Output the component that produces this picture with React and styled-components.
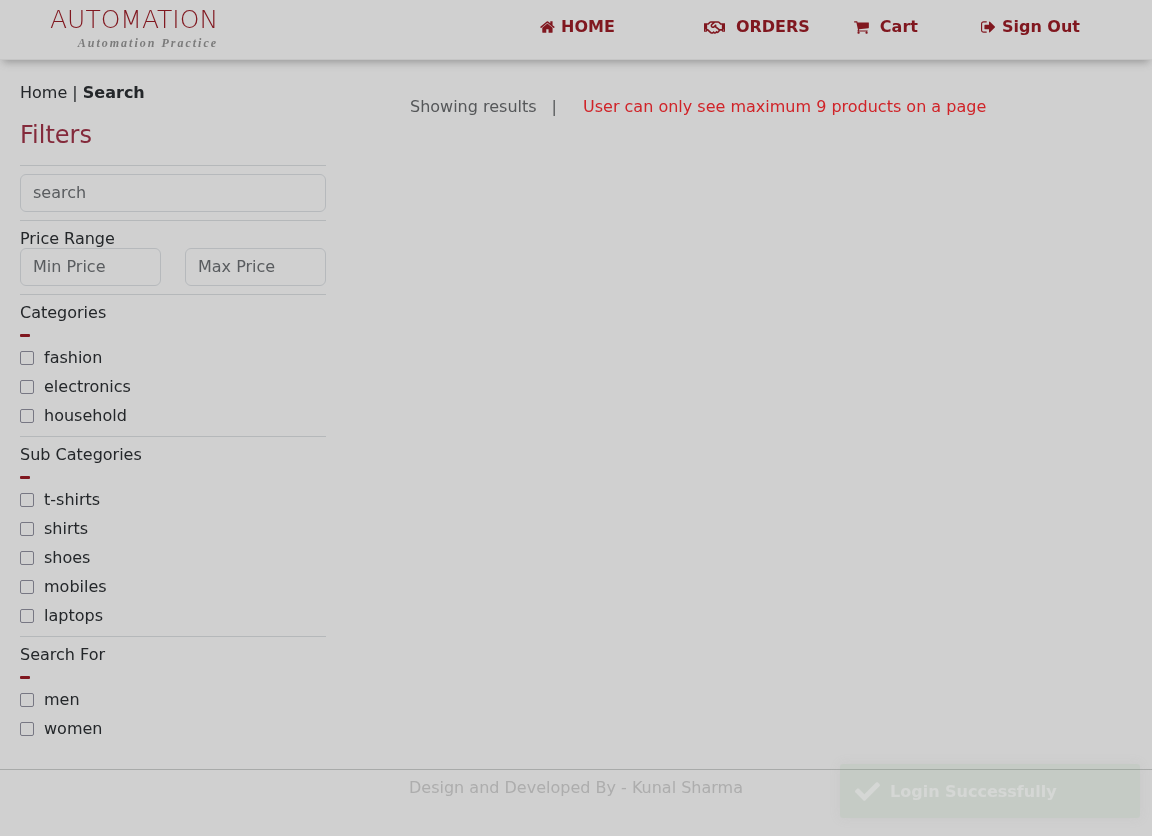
import React from "react";
import styled, { createGlobalStyle } from "styled-components";
import { FaRegHandshake, FaCheck } from "react-icons/fa";

const GlobalStyle = createGlobalStyle`
  *, *::before, *::after { box-sizing: border-box; }
  body {
    margin: 0;
    background: #d0d0d0;
    color: #24272a;
    font-family: "DejaVu Sans", sans-serif;
    font-size: 16px;
    line-height: 24px;
  }
  h1, h2, p { margin: 0; font-weight: 400; }
  a { color: inherit; text-decoration: none; }
`;

const Page = styled.div`
  min-height: 100vh;
  display: flex;
  flex-direction: column;
  will-change: opacity;
`;

const Header = styled.header`
  height: 60px;
  display: flex;
  justify-content: space-between;
  align-items: flex-start;
  padding: 0 72px 0 50px;
  border-bottom: 1px solid #c6c6c6;
  box-shadow: 0 5px 8px -3px #969696;
`;

const Brand = styled.a`
  display: flex;
  flex-direction: column;
  align-items: flex-end;
  padding-top: 5px;
`;

const BrandName = styled.span`
  font-size: 25px;
  font-weight: 200;
  line-height: 30px;
  color: #80171f;
`;

const BrandTagline = styled.span`
  font-family: "Z003", "URW Chancery L", "Apple Chancery", "Liberation Serif", cursive;
  font-size: 12px;
  font-style: italic;
  font-weight: 700;
  line-height: 16px;
  letter-spacing: 2px;
  color: #7b7b7b;
`;

const Nav = styled.nav`
  display: flex;
  padding-top: 15px;
  color: #80171f;
  font-weight: 700;
`;

const NavLink = styled.a`
  display: flex;
  align-items: center;
  gap: ${(p) => p.$gap}px;
  margin-left: ${(p) => p.$space}px;
  white-space: nowrap;
`;

const Icon = styled.svg`
  width: 16px;
  height: 16px;
  fill: currentColor;
`;

const Content = styled.div`
  flex: 1;
  display: grid;
  grid-template-columns: 306px 1fr;
  column-gap: 84px;
  padding: 21px 20px 0;
`;

const Breadcrumb = styled.nav`
  margin-bottom: 16px;
`;

const FilterTitle = styled.h1`
  font-size: 24px;
  line-height: 28px;
  color: #842a3b;
  margin-bottom: 16px;
`;

const Section = styled.section`
  border-top: 1px solid #b5b8ba;
  padding: 8px 0;
`;

const SectionTitle = styled.h2`
  font-size: 16px;
  line-height: 19px;
`;

const PriceRow = styled.div`
  display: grid;
  grid-template-columns: 1fr 1fr;
  gap: 24px;
`;

const TextInput = styled.input`
  display: block;
  width: 100%;
  height: 38px;
  padding: 5px 12px 7px;
  border: 1px solid #b6b9bc;
  border-radius: 6px;
  background: transparent;
  font: inherit;
  color: inherit;
  &::placeholder { color: #595c5f; opacity: 1; }
`;

const Collapse = styled.button`
  display: flex;
  align-items: center;
  width: 10px;
  height: 24px;
  padding: 3px 0 0;
  border: 0;
  background: none;
  &::before {
    content: "";
    width: 10px;
    height: 3px;
    border-radius: 1px;
    background: #80171f;
  }
`;

const Option = styled.label`
  display: flex;
  align-items: center;
  gap: 10px;
  height: 24px;
  & + & { margin-top: 5px; }
`;

const Checkbox = styled.input`
  appearance: none;
  width: 14px;
  height: 14px;
  margin: 0;
  border: 1px solid #777783;
  border-radius: 2px;
  &:checked { background: #80171f; }
`;

const Results = styled.main`
  display: flex;
  align-items: flex-start;
  padding-top: 14px;
  color: #555759;
`;

const Divider = styled.span`
  margin: 0 26px 0 15px;
`;

const Notice = styled.p`
  color: #d02328;
`;

const Footer = styled.footer`
  border-top: 1px solid #a8aaa9;
  height: 67px;
  padding-top: 6px;
  text-align: center;
  color: #adadad;
`;

const Toast = styled.div`
  position: fixed;
  right: 12px;
  bottom: 18px;
  width: 300px;
  height: 54px;
  display: flex;
  align-items: center;
  gap: 10px;
  padding: 1px 15px 0;
  border-radius: 3px;
  background: rgba(120, 170, 125, 0.12);
  box-shadow: 0 0 12px rgba(153, 153, 153, 0.12);
  color: #d5d7d5;
  font-weight: 700;
`;

const groups = [
  { title: "Categories", items: ["fashion", "electronics", "household"] },
  { title: "Sub Categories", items: ["t-shirts", "shirts", "shoes", "mobiles", "laptops"] },
  { title: "Search For", items: ["men", "women"] },
];

const HomeIcon = () => (
  <Icon viewBox="64 0 1792 1792" aria-hidden="true">
    <path d="M1472 992v480q0 26-19 45t-45 19h-384v-384h-256v384h-384q-26 0-45-19t-19-45v-480q0-1 .5-3t.5-3l575-474 575 474q1 2 1 6zm223-69l-62 74q-8 9-21 11h-3q-13 0-21-7l-692-577-692 577q-12 8-24 7-13-2-21-11l-62-74q-8-10-7-23.5t11-21.5l719-599q32-26 76-26t76 26l244 204v-195q0-14 9-23t23-9h192q14 0 23 9t9 23v408l219 182q10 8 11 21.5t-7 23.5z" />
  </Icon>
);

const CartIcon = () => (
  <Icon viewBox="64 0 1792 1792" aria-hidden="true">
    <path d="M704 1536q0 52-38 90t-90 38-90-38-38-90 38-90 90-38 90 38 38 90zm896 0q0 52-38 90t-90 38-90-38-38-90 38-90 90-38 90 38 38 90zm128-1088v512q0 24-16.5 42.5t-40.5 21.5l-1044 122q13 60 13 70 0 16-24 64h920q26 0 45 19t19 45-19 45-45 19h-1024q-26 0-45-19t-19-45q0-11 8-31.5t16-36 21.5-40 15.5-29.5l-177-823h-204q-26 0-45-19t-19-45 19-45 45-19h256q16 0 28.5 6.5t19.5 15.5 13 24.5 8 26 5.5 29.5 4.5 26h1201q26 0 45 19t19 45z" />
  </Icon>
);

const SignOutIcon = () => (
  <Icon viewBox="64 0 1792 1792" aria-hidden="true">
    <path d="M704 1440q0 4 1 20t.5 26.5-3 23.5-10 19.5-20.5 6.5h-320q-119 0-203.5-84.5t-84.5-203.5v-704q0-119 84.5-203.5t203.5-84.5h320q13 0 22.5 9.5t9.5 22.5q0 4 1 20t.5 26.5-3 23.5-10 19.5-20.5 6.5h-320q-66 0-113 47t-47 113v704q0 66 47 113t113 47h312l11.5 1 11.5 3 8 5.5 7 9 2 13.5zm928-544q0 26-19 45l-544 544q-19 19-45 19t-45-19-19-45v-288h-448q-26 0-45-19t-19-45v-384q0-26 19-45t45-19h448v-288q0-26 19-45t45-19 45 19l544 544q19 19 19 45z" />
  </Icon>
);

const Handshake = styled(FaRegHandshake)`
  width: 21px;
  height: 17px;
`;

const Check = styled(FaCheck)`
  width: 25px;
  height: 25px;
`;

function FilterGroup({ title, items }) {
  return (
    <Section>
      <SectionTitle>{title}</SectionTitle>
      <Collapse type="button" aria-label={`Collapse ${title}`} />
      {items.map((item) => (
        <Option key={item}>
          <Checkbox type="checkbox" />
          {item}
        </Option>
      ))}
    </Section>
  );
}

export default function App() {
  return (
    <Page>
      <GlobalStyle />
      <Header>
        <Brand href="#">
          <BrandName>AUTOMATION</BrandName>
          <BrandTagline>Automation Practice</BrandTagline>
        </Brand>
        <Nav>
          <NavLink href="#" $gap={5} $space={0}><HomeIcon />HOME</NavLink>
          <NavLink href="#" $gap={11} $space={89}><Handshake />ORDERS</NavLink>
          <NavLink href="#" $gap={10} $space={44}><CartIcon />Cart</NavLink>
          <NavLink href="#" $gap={5} $space={63}><SignOutIcon />Sign Out</NavLink>
        </Nav>
      </Header>
      <Content>
        <aside>
          <Breadcrumb><a href="#">Home</a> | <b>Search</b></Breadcrumb>
          <FilterTitle>Filters</FilterTitle>
          <Section>
            <TextInput type="text" placeholder="search" aria-label="search" />
          </Section>
          <Section>
            <SectionTitle>Price Range</SectionTitle>
            <PriceRow>
              <TextInput type="text" placeholder="Min Price" aria-label="Min Price" />
              <TextInput type="text" placeholder="Max Price" aria-label="Max Price" />
            </PriceRow>
          </Section>
          {groups.map((g) => <FilterGroup key={g.title} {...g} />)}
        </aside>
        <Results>
          <p>Showing results</p>
          <Divider>|</Divider>
          <Notice>User can only see maximum 9 products on a page</Notice>
        </Results>
      </Content>
      <Footer>Design and Developed By - Kunal Sharma</Footer>
      <Toast role="status"><Check />Login Successfully</Toast>
    </Page>
  );
}
